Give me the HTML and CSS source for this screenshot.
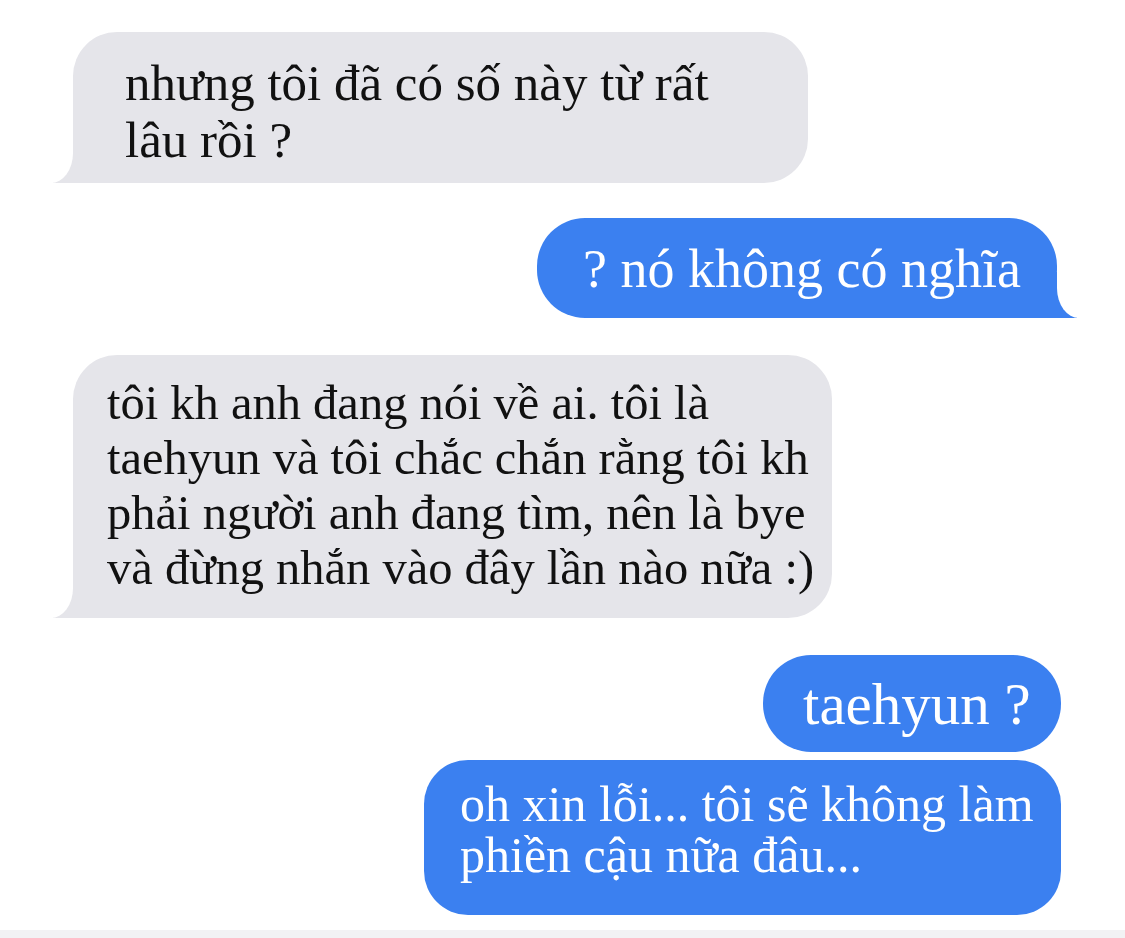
FILE: index.html
```html
<!DOCTYPE html>
<html lang="vi">
<head>
    <meta charset="UTF-8">
    <meta name="viewport" content="width=device-width, initial-scale=1.0">
    <title>Tin nhắn</title>
    <link rel="stylesheet" href="styles.css">
</head>
<body>
    <div class="thread">
        <div class="bubble in tail first">nhưng tôi đã có số này từ rất<br>lâu rồi ?</div>
        <div class="bubble out tail second">? nó không có nghĩa</div>
        <div class="bubble in tail third">tôi kh anh đang nói về ai. tôi là<br>taehyun và tôi chắc chắn rằng tôi kh<br>phải người anh đang tìm, nên là bye<br>và đừng nhắn vào đây lần nào nữa :)</div>
        <div class="bubble out fourth">taehyun ?</div>
        <div class="bubble out fifth">oh xin lỗi... tôi sẽ không làm<br>phiền cậu nữa đâu...</div>
    </div>
    <div class="bottom-bar"></div>
</body>
</html>
```

FILE: styles.css
```css
body {
    margin: 0;
    padding: 0;
    background-color: white;
    font-family: 'Liberation Serif', 'Times New Roman', serif;
    height: 938px;
    overflow: hidden;
    display: flex;
    flex-direction: column;
}
.thread {
    flex: 1;
    display: flex;
    flex-direction: column;
    padding-top: 32px;
}
.bubble {
    position: relative;
    z-index: 0;
    box-sizing: border-box;
    font-size: 48px;
    line-height: 55px;
    padding: 20px 30px;
    border-radius: 44px;
    white-space: nowrap;
}
.in {
    align-self: flex-start;
    background-color: #e5e5ea;
    color: #111;
    margin-left: 73px;
}
.out {
    align-self: flex-end;
    background-color: #3b80f0;
    color: white;
}
/* tails sit behind the text */
.tail::before,
.tail::after {
    content: "";
    position: absolute;
    z-index: -1;
    bottom: 0;
    height: 46px;
}
.in.tail::before {
    left: -20px;
    width: 66px;
    background-color: #e5e5ea;
}
.in.tail::after {
    left: -40px;
    width: 40px;
    background-color: white;
    border-bottom-right-radius: 22px 30px;
}
.out.tail::before {
    right: -20px;
    width: 66px;
    background-color: #3b80f0;
}
.out.tail::after {
    right: -40px;
    width: 40px;
    background-color: white;
    border-bottom-left-radius: 22px 30px;
}
.first {
    width: 735px;
    height: 151px;
    padding-top: 23px;
    padding-left: 52px;
    font-size: 51px;
    line-height: 57px;
}
.second {
    margin-top: 35px;
    margin-right: 68px;
    width: 520px;
    height: 100px;
    padding-top: 24px;
    padding-left: 46px;
    border-radius: 48px;
    font-size: 54px;
}
.third {
    margin-top: 37px;
    width: 759px;
    height: 263px;
    padding-left: 34px;
    font-size: 48.5px;
}
.fourth {
    margin-top: 37px;
    margin-right: 64px;
    width: 298px;
    height: 97px;
    padding-top: 22px;
    padding-left: 40px;
    border-radius: 48px;
    font-size: 59px;
}
.fifth {
    margin-top: 8px;
    margin-right: 64px;
    width: 637px;
    height: 155px;
    padding-top: 19px;
    padding-left: 36px;
    font-size: 50px;
    line-height: 51px;
}
.bottom-bar {
    height: 8px;
    background-color: #f2f2f4;
}
```
